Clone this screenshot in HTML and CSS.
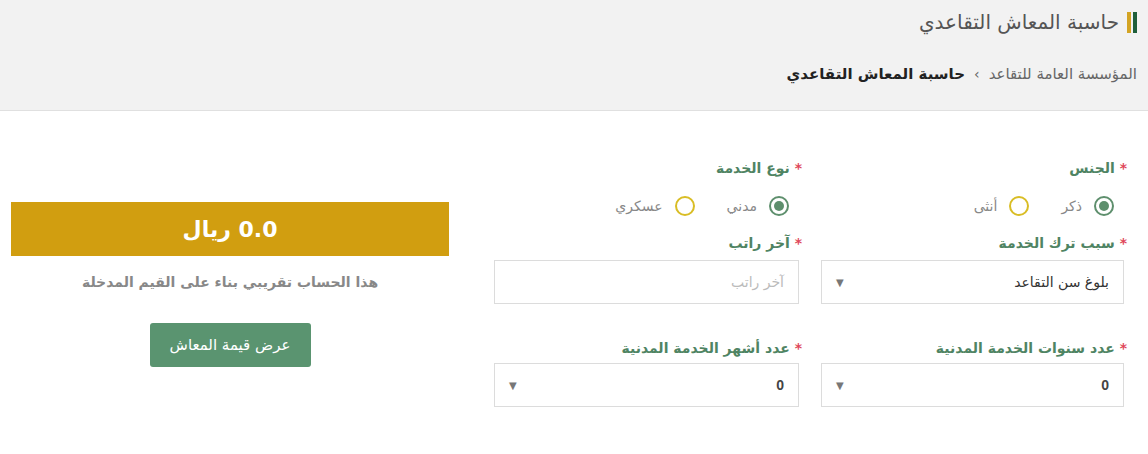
FILE: index.html
```html
<!DOCTYPE html>
<html lang="ar" dir="rtl">
<head>
<meta charset="utf-8">
<title>حاسبة المعاش التقاعدي</title>
<link rel="stylesheet" href="styles.css">
</head>
<body>
<header class="page-header">
  <h1 class="page-title"><span class="title-bars"><span class="bar-green"></span><span class="bar-gold"></span></span>حاسبة المعاش التقاعدي</h1>
  <nav class="breadcrumb">
    <span class="crumb">المؤسسة العامة للتقاعد</span>
    <span class="crumb-sep">›</span>
    <span class="crumb-current">حاسبة المعاش التقاعدي</span>
  </nav>
</header>
<main class="content">
  <section class="form-grid">
    <div class="field">
      <label class="field-label"><span class="req">*</span> الجنس</label>
      <div class="radios">
        <span class="radio-opt"><span class="radio checked"></span>ذكر</span>
        <span class="radio-opt"><span class="radio"></span>أنثى</span>
      </div>
    </div>
    <div class="field">
      <label class="field-label"><span class="req">*</span> نوع الخدمة</label>
      <div class="radios">
        <span class="radio-opt"><span class="radio checked"></span>مدني</span>
        <span class="radio-opt"><span class="radio"></span>عسكري</span>
      </div>
    </div>
    <div class="field">
      <label class="field-label"><span class="req">*</span> سبب ترك الخدمة</label>
      <div class="select"><span class="select-value">بلوغ سن التقاعد</span><span class="caret">▼</span></div>
    </div>
    <div class="field">
      <label class="field-label"><span class="req">*</span> آخر راتب</label>
      <div class="input"><span class="placeholder">آخر راتب</span></div>
    </div>
    <div class="field field-low">
      <label class="field-label"><span class="req">*</span> عدد سنوات الخدمة المدنية</label>
      <div class="select"><span class="select-value num">0</span><span class="caret">▼</span></div>
    </div>
    <div class="field field-low">
      <label class="field-label"><span class="req">*</span> عدد أشهر الخدمة المدنية</label>
      <div class="select"><span class="select-value num">0</span><span class="caret">▼</span></div>
    </div>
  </section>
  <section class="result">
    <div class="amount">0.0 ريال</div>
    <p class="note">هذا الحساب تقريبي بناء على القيم المدخلة</p>
    <button class="btn">عرض قيمة المعاش</button>
  </section>
</main>
</body>
</html>
```
FILE: styles.css
```css
* { box-sizing: border-box; }
html, body { margin: 0; padding: 0; }
body {
  direction: rtl;
  font-family: "DejaVu Sans", "Noto Sans", sans-serif;
  background: #fff;
  color: #333;
  width: 1148px;
  height: 454px;
  overflow: hidden;
}
.page-header {
  background: #f2f2f2;
  border-bottom: 1px solid #e0e0e0;
  height: 111px;
  padding: 8px 11px 0 0;
}
.page-title {
  margin: 0;
  font-size: 20px;
  font-weight: normal;
  color: #555;
  display: flex;
  align-items: center;
  height: 28px;
}
.title-bars {
  display: inline-flex;
  gap: 2px;
  margin-left: 8px;
}
.bar-green { width: 4px; height: 21px; background: #1f5f3b; }
.bar-gold { width: 4px; height: 21px; background: #d3a424; }
.breadcrumb {
  margin-top: 29px;
  font-size: 15px;
  display: flex;
  align-items: center;
  gap: 9px;
}
.crumb { color: #666; }
.crumb-sep { color: #666; font-size: 14px; }
.crumb-current { color: #222; font-weight: bold; }
.content {
  display: flex;
  padding: 48px 24px 0 0;
}
.form-grid {
  display: grid;
  grid-template-columns: 303px 305px;
  column-gap: 22px;
}
.field { display: flex; flex-direction: column; }
.field-label {
  font-size: 14px;
  font-weight: bold;
  color: #4f8463;
  height: 18px;
  line-height: 18px;
  margin-right: -3px;
}
.field-low { margin-top: 35px; }
.field-low .select { margin-top: 6px; }
.req { color: #e0485a; }
.radios {
  display: flex;
  gap: 32px;
  margin-top: 17px;
  margin-bottom: 16px;
  padding-right: 10px;
  font-size: 14px;
  color: #888;
}
.radio-opt { display: flex; align-items: center; gap: 12px; height: 24px; }
.radio {
  width: 20px; height: 20px;
  border-radius: 50%;
  border: 2px solid #d9bd25;
  position: relative;
}
.radio.checked { border-color: #5e8f6d; }
.radio.checked::after {
  content: "";
  position: absolute;
  inset: 3px;
  border-radius: 50%;
  background: #5e8f6d;
}
.select, .input {
  margin-top: 8px;
  height: 44px;
  border: 1px solid #dcdcdc;
  display: flex;
  align-items: center;
  justify-content: space-between;
  padding: 0 14px;
  font-size: 14px;
  color: #333;
  background: #fff;
}
.caret { color: #777; font-size: 10px; }
.placeholder { color: #bbb; }
.num { font-family: "Liberation Sans", sans-serif; font-weight: bold; color: #444; }
.result {
  width: 438px;
  margin-right: 45px;
  display: flex;
  flex-direction: column;
  align-items: center;
  padding-top: 43px;
}
.amount {
  width: 100%;
  height: 54px;
  background: #d19e10;
  color: #fff;
  font-size: 22px;
  font-weight: bold;
  display: flex;
  align-items: center;
  justify-content: center;
}
.note {
  margin: 18px 0 0;
  font-size: 14px;
  color: #888;
  font-weight: bold;
}
.btn {
  margin-top: 33px;
  width: 161px;
  height: 44px;
  background: #5a9470;
  color: #fff;
  border: none;
  border-radius: 3px;
  font-family: inherit;
  font-size: 15px;
}
```
